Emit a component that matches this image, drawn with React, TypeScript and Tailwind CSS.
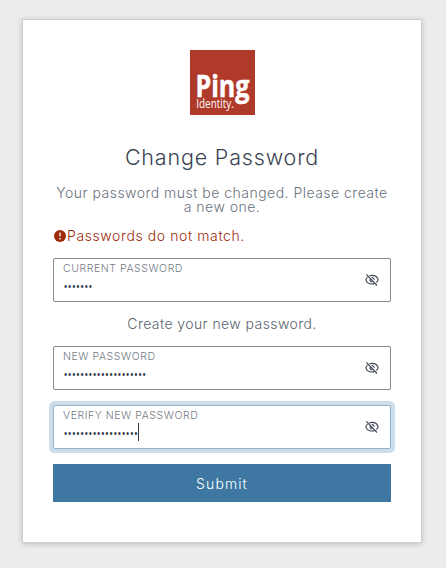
import React from 'react';

function EyeOff() {
  return (
    <svg viewBox="0 0 14 14" className="h-[14px] w-[14px] shrink-0" fill="none" stroke="#3b4452" strokeWidth="1.100">
      <path d="M4.300 2.900c.8-.3 1.700-.5 2.700-.5 3 0 5.500 1.700 6.200 4.300-.3 1.200-1 2.200-2 2.900M9.700 10.500c-.8.3-1.700.5-2.700.5-3 0-5.500-1.700-6.200-4.300.3-1.200 1-2.100 2-2.800" />
      <path d="M1.300 1.300 12 12.500M6.600 4.700c1.400-.2 2.500.8 2.400 2.200M5 6.300c-.2 1.400.8 2.400 2.100 2.400" />
    </svg>
  );
}

function Field({ label, count, focused = false }: { label: string; count: number; focused?: boolean }) {
  return (
    <div
      className={`flex h-11 items-center justify-between rounded-[2px] border bg-white pr-[11px] pl-[9px] ${
        focused ? 'border-[#8fb3ce] shadow-[0_0_0_4px_#cddde9]' : 'border-[#868c94]'
      }`}
    >
      <div className="flex h-full flex-col">
        <span className="mt-[3px] text-[10.5px] leading-[13px] font-light tracking-[0.56px] whitespace-nowrap text-[#747b84]">{label}</span>
        <div className="flex h-[18px] items-center">
          <span className="flex pt-[6px] pl-[0.5px] text-[3px] leading-none text-[#343f4d]">
            {Array.from({ length: count }, (_, i) => (
              <span key={i} className="w-[4.15px] text-center">●</span>
            ))}
          </span>
          {focused && <span className="mt-[2px] h-[18px] w-px bg-[#303a46]" />}
        </div>
      </div>
      <EyeOff />
    </div>
  );
}

export default function App() {
  return (
    <div className="flex h-[568px] w-[446px] flex-col bg-[#ececec] pt-5 pl-[23px] font-['Inter','Liberation_Sans',sans-serif]">
      <main className="flex h-[522px] w-[398px] flex-col bg-white px-[30px] pt-[30px] shadow-[0_0_0_1px_#cecece,0_1px_6px_1px_rgba(0,0,0,0.2)]">
        <svg viewBox="0 0 65 65" className="ml-[137px] h-[65px] w-[65px] shrink-0 overflow-visible">
          <rect width="65" height="65" fill="#b03a2a" />
          <text x="5.500" y="47.300" fontSize="29.500" fontWeight="700" fill="white" stroke="white" strokeWidth="0.500" fontFamily="Open Sans, sans-serif" textLength="54" lengthAdjust="spacingAndGlyphs">Ping</text>
          <text x="6.300" y="58.200" fontSize="12" fill="white" fontFamily="Open Sans, sans-serif" textLength="37.500" lengthAdjust="spacingAndGlyphs">Identity.</text>
        </svg>
        <h1 className="mt-[28px] text-center text-[21.5px] leading-[28px] font-light tracking-[0.82px] whitespace-nowrap text-[#3b4452]">Change Password</h1>
        <p className="mt-[15px] text-center text-[14px] leading-[14px] font-light tracking-[0.48px] whitespace-nowrap text-[#68727e]">
          Your password must be changed. Please create<br />a new one.
        </p>
        <div className="mt-[14px] flex h-4 items-center text-[#9b2b0a]">
          <svg viewBox="0 0 14 14" className="h-[14px] w-[14px]">
            <circle cx="7" cy="7" r="6" fill="currentColor" />
            <path d="M7 3.500v4M7 9v1.500" stroke="white" strokeWidth="1.300" />
          </svg>
          <span className="text-[14px] leading-4 font-light tracking-[0.6px] whitespace-nowrap">Passwords do not match.</span>
        </div>
        <div className="mt-[14px]"><Field label="CURRENT PASSWORD" count={7} /></div>
        <p className="mt-[14px] text-center text-[14px] leading-4 font-light tracking-[0.42px] text-[#5b6571]">Create your new password.</p>
        <div className="mt-[14px] flex flex-col gap-[15px]">
          <Field label="NEW PASSWORD" count={20} />
          <Field label="VERIFY NEW PASSWORD" count={18} focused />
          <button className="h-[38px] bg-[#3d77a2] text-[14px] font-light tracking-[1.1px] text-white">Submit</button>
        </div>
      </main>
    </div>
  );
}
